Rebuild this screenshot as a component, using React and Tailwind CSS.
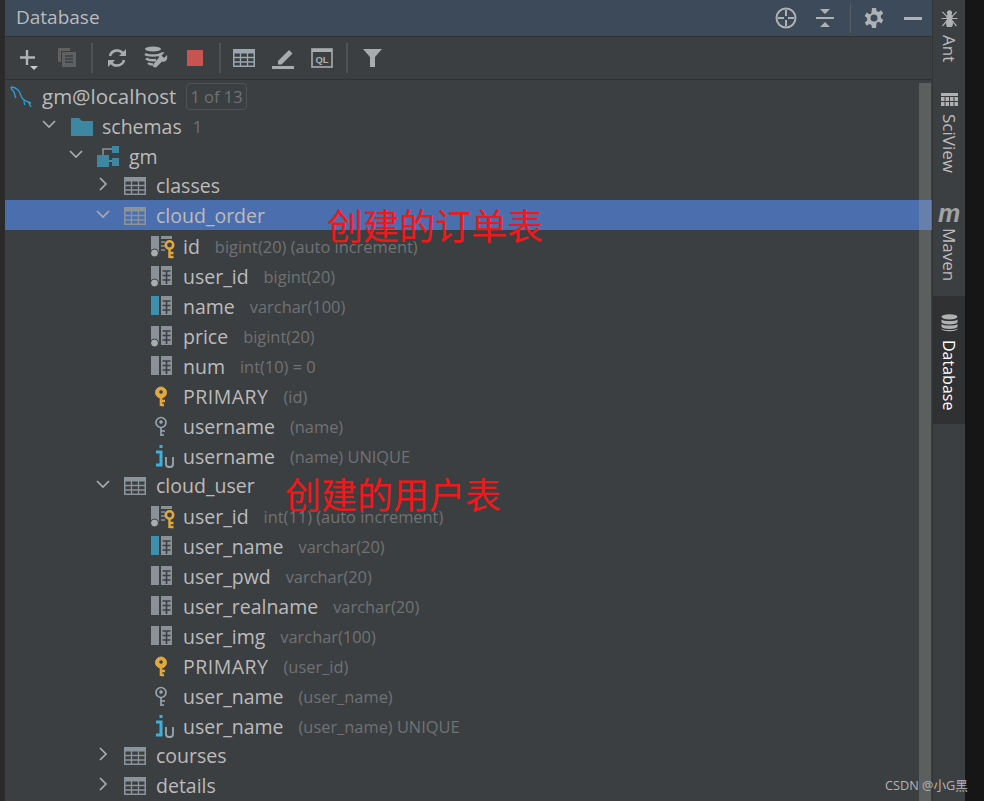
import React from 'react';

function Chevron({ open }) {
  return (
    <svg width="14" height="14" viewBox="0 0 14 14" fill="none" stroke="#a9acae" strokeWidth="1.7">
      {open ? <path d="M1 4l6 6 6-6" /> : <path d="M4 1l6 6-6 6" />}
    </svg>
  );
}

function TableIcon() {
  return (
    <svg width="22" height="18" viewBox="0 0 22 18" fill="none" stroke="#8c949b">
      <rect x="0" y="0" width="22" height="4.500" fill="#8c949b" stroke="none" />
      <path d="M.75 0v18M21.250 0v18M0 17.250h22" strokeWidth="1.500" />
      <path d="M0 8.500h22M0 13h22M7.500 4v14M14.500 4v14" strokeWidth="1.300" />
    </svg>
  );
}

function FolderIcon() {
  return (
    <svg width="22" height="18" viewBox="0 0 22 18">
      <path d="M0 0h8l3 3h11v15H0z" fill="#3d87a3" />
    </svg>
  );
}

function SchemaIcon() {
  return (
    <svg width="22" height="22" viewBox="0 0 22 22">
      <path d="M6 9V3h9M12 15h3" fill="none" stroke="#8c949b" strokeWidth="1.500" />
      <rect x="0" y="9" width="12" height="12" fill="#3d87a3" />
      <rect x="15" y="0" width="7" height="7" fill="#3d87a3" />
      <rect x="15" y="12" width="7" height="8" fill="#3d87a3" />
    </svg>
  );
}

function KeyShape({ color, hollow }) {
  return (
    <svg width="14" height="21" viewBox="0 0 14 21">
      <circle cx="7" cy="6.500" r={hollow ? 5 : 5.500} fill={hollow ? 'none' : color} stroke={color} strokeWidth={hollow ? 1.600 : 1} />
      <circle cx="7" cy="6" r="1.800" fill={hollow ? color : '#3c3f41'} />
      <path d="M7 11v9M7 15h4M7 19h3" fill="none" stroke={color} strokeWidth={hollow ? 1.600 : 2.600} />
    </svg>
  );
}

function ColumnIcon({ kind }) {
  const bar = kind === 'name' ? '#3d8fae' : '#8b9197';
  const dot = kind === 'pk' || kind === 'nn';
  return (
    <svg width="25" height="24" viewBox="0 0 25 24">
      <rect x="0" y="1" width="8" height={dot ? 16 : 19} fill={bar} />
      {dot && <circle cx="3.500" cy="18" r="4" fill="#a9acae" stroke="#3c3f41" strokeWidth="1" />}
      {kind !== 'pk' && (
        <g>
          <rect x="10" y="1" width="11" height="19" fill="#8b9197" />
          <path d="M11.500 6h8M11.500 10.500h8M11.500 15h8M15.500 6v13" stroke="#3c3f41" strokeWidth="1.600" />
        </g>
      )}
      {kind === 'pk' && (
        <g>
          <rect x="10" y="1" width="11" height="3" fill="#8b9197" />
          <path d="M10 7h4M10 11h4M10 15h4" stroke="#8b9197" strokeWidth="1.600" />
          <circle cx="18.500" cy="10" r="3.700" fill="none" stroke="#e0a83f" strokeWidth="2.600" />
          <path d="M18.500 13v10M18.500 18h4M18.500 22h4" stroke="#e0a83f" strokeWidth="2.400" fill="none" />
        </g>
      )}
    </svg>
  );
}

function UniqueIcon() {
  return (
    <svg width="20" height="24" viewBox="0 0 20 24">
      <rect x="3.500" y="0" width="3" height="3" fill="#3fb0dc" />
      <path d="M0 7h5v13H0" fill="none" stroke="#3fb0dc" strokeWidth="3" />
      <path d="M10 12v7a3 3 0 0 0 3 3h1a3 3 0 0 0 3-3v-7" fill="none" stroke="#9aa7b0" strokeWidth="1.800" />
    </svg>
  );
}

function RowIcon({ kind }) {
  if (kind === 'table') return <TableIcon />;
  if (kind === 'folder') return <FolderIcon />;
  if (kind === 'schema') return <SchemaIcon />;
  if (kind === 'pkey') return <span className="pl-[3px]"><KeyShape color="#e0a83f" /></span>;
  if (kind === 'key') return <span className="pl-[3px]"><KeyShape color="#9aa7b0" hollow /></span>;
  if (kind === 'unique') return <span className="pl-[5px]"><UniqueIcon /></span>;
  return <ColumnIcon kind={kind} />;
}

const indent = ['', 'pl-[66px] pt-[3px]', 'pl-[92px] pt-[3px]', 'pl-[119px] pt-[1px]', 'pl-[146px] pt-[3px]'];
const arrowLeft = ['', 'left-[37px]', 'left-[64px]', 'left-[91px]', 'left-[118px]'];
const textLeft = ['', 'w-[31px]', 'w-[32px]', 'w-[32px]', 'w-[32px]'];

const rows = [
  { level: 1, open: true, icon: 'folder', name: 'schemas', extra: '1', gap: 'ml-[11px]' },
  { level: 2, open: true, icon: 'schema', name: 'gm' },
  { level: 3, open: false, icon: 'table', name: 'classes' },
  { level: 3, open: true, icon: 'table', name: 'cloud_order', selected: true },
  { level: 4, icon: 'pk', name: 'id', extra: 'bigint(20) (auto increment)' },
  { level: 4, icon: 'nn', name: 'user_id', extra: 'bigint(20)' },
  { level: 4, icon: 'name', name: 'name', extra: 'varchar(100)' },
  { level: 4, icon: 'nn', name: 'price', extra: 'bigint(20)' },
  { level: 4, icon: 'col', name: 'num', extra: 'int(10) = 0' },
  { level: 4, icon: 'pkey', name: 'PRIMARY', extra: '(id)', wide: true },
  { level: 4, icon: 'key', name: 'username', extra: '(name)' },
  { level: 4, icon: 'unique', name: 'username', extra: '(name) UNIQUE' },
  { level: 3, open: true, icon: 'table', name: 'cloud_user' },
  { level: 4, icon: 'pk', name: 'user_id', extra: 'int(11) (auto increment)' },
  { level: 4, icon: 'name', name: 'user_name', extra: 'varchar(20)' },
  { level: 4, icon: 'col', name: 'user_pwd', extra: 'varchar(20)' },
  { level: 4, icon: 'col', name: 'user_realname', extra: 'varchar(20)' },
  { level: 4, icon: 'col', name: 'user_img', extra: 'varchar(100)' },
  { level: 4, icon: 'pkey', name: 'PRIMARY', extra: '(user_id)', wide: true },
  { level: 4, icon: 'key', name: 'user_name', extra: '(user_name)' },
  { level: 4, icon: 'unique', name: 'user_name', extra: '(user_name) UNIQUE' },
  { level: 3, open: false, icon: 'table', name: 'courses' },
  { level: 3, open: false, icon: 'table', name: 'details' },
];

function TreeRow({ row }) {
  return (
    <div className={`relative flex h-[30px] shrink-0 items-center whitespace-nowrap ${indent[row.level]} ${row.selected ? 'bg-[#4b6eaf]' : ''}`}>
      {row.open !== undefined && (
        <span className={`absolute top-[7px] flex h-[14px] w-[14px] ${arrowLeft[row.level]}`}>
          <Chevron open={row.open} />
        </span>
      )}
      <span className={`flex shrink-0 items-center ${textLeft[row.level]}`}><RowIcon kind={row.icon} /></span>
      <span className={`text-[#bbbbbb] ${row.wide ? 'tracking-[0.5px]' : ''}`}>{row.name}</span>
      {row.extra && <span className={`${row.gap || 'ml-[15px]'} pt-[2px] text-[16.400px] text-[#6f7274]`}>{row.extra}</span>}
    </div>
  );
}

function Sep({ className }) {
  return <span className={`h-[30px] w-[2px] bg-[#505254] ${className}`} />;
}

function Toolbar() {
  return (
    <div className="flex h-[43px] shrink-0 items-center border-b border-[#2f3133] pl-[14px]">
      <svg width="24" height="26" viewBox="0 0 24 26" className="mt-[6px]">
        <path d="M8 2v15M1 9.500h15" stroke="#b0b3b5" strokeWidth="2.400" />
        <path d="M11 18h8l-4 4z" fill="#c8cacc" />
      </svg>
      <svg width="20" height="20" viewBox="0 0 20 20" className="ml-[14px]">
        <path d="M1 0h12v3H4v11H1z" fill="#5e6062" />
        <rect x="5" y="4" width="14" height="15" fill="#5e6062" />
        <path d="M8 8h8M8 11h8M8 14h8" stroke="#3c3f41" strokeWidth="1.300" />
      </svg>
      <Sep className="ml-[14px]" />
      <svg width="20" height="20" viewBox="0 0 20 20" className="ml-[14px]" fill="none">
        <path d="M3 8a7.300 7.300 0 0 1 13-2.500M17 12a7.300 7.300 0 0 1-13 2.500" stroke="#a9acae" strokeWidth="2.600" />
        <path d="M19 1v7h-7zM1 19v-7h7z" fill="#a9acae" />
      </svg>
      <svg width="24" height="24" viewBox="0 0 24 24" className="ml-[17px]" fill="none">
        <ellipse cx="9" cy="3" rx="8" ry="2.500" fill="#a9acae" />
        <path d="M1 8c3 2 13 2 16 0M2 12.500c2 1.500 7 2 10 1.500M4 17c1 1 3 1.500 5 1.500" stroke="#a9acae" strokeWidth="2.400" />
        <path d="M23 9l-3 3-2.500-2.500 3-3c-3-1-6.500 1-5.500 5L9.500 18l-.5 3 3 .5 6-6c4 1 6-2 5-6.500z" fill="#a9acae" />
      </svg>
      <span className="ml-[19px] h-[16px] w-[16px] bg-[#c75450]" />
      <Sep className="ml-[16px]" />
      <svg width="22" height="18" viewBox="0 0 22 18" className="ml-[12px]" fill="none" stroke="#9aa7b0">
        <rect width="22" height="4.500" fill="#9aa7b0" stroke="none" />
        <path d="M.75 0v18M21.250 0v18M0 17.250h22" strokeWidth="1.500" />
        <path d="M0 8.500h22M0 13h22M7.500 4v14M14.500 4v14" strokeWidth="1.300" />
      </svg>
      <svg width="22" height="21" viewBox="0 0 22 21" className="ml-[17px]">
        <path d="M6 13L17 2l3.500 3.500-11 11H6z" fill="#a9acae" />
        <rect y="18" width="22" height="3" fill="#a9acae" />
      </svg>
      <svg width="22" height="20" viewBox="0 0 22 20" className="ml-[17px]">
        <rect x="1" y="1" width="20" height="18" fill="none" stroke="#a9acae" strokeWidth="1.600" />
        <rect x="1" y="1" width="20" height="3" fill="#a9acae" />
        <text x="11" y="15" textAnchor="middle" fontSize="9.500" fontWeight="700" fill="#a9acae" fontFamily="Liberation Sans">QL</text>
      </svg>
      <Sep className="ml-[13px]" />
      <svg width="20" height="20" viewBox="0 0 20 20" className="ml-[15px]">
        <path d="M0 1h19l-7 8v10H7V9z" fill="#a9acae" />
      </svg>
    </div>
  );
}

function Header() {
  return (
    <div className="flex h-[37px] shrink-0 items-center border-b border-[#2f3133] bg-[#3c4a5a] pl-[11px] pr-[10px]">
      <span className="pb-[2px] text-[19px] text-[#bbbbbb]">Database</span>
      <div className="ml-auto flex items-center">
        <svg width="22" height="22" viewBox="0 0 22 22" fill="none" stroke="#afb1b3" strokeWidth="2">
          <circle cx="11" cy="11" r="9.500" />
          <path d="M11 3v6M11 13v6M3 11h6M13 11h6" />
        </svg>
        <svg width="18" height="18" viewBox="0 0 18 18" className="ml-[19px]">
          <path d="M0 8h18v2H0zM4 0h10l-5 5zM4 18h10l-5-5z" fill="#afb1b3" />
        </svg>
        <span className="ml-[16px] h-[30px] w-[1px] bg-[#535b64]" />
        <svg width="20" height="20" viewBox="0 0 20 20" className="ml-[13px]" fill="#afb1b3">
          <path fillRule="evenodd" d="M8 0h4l.6 3 2 .9 2.600-1.700 2 3.400-2.400 2 .1 2.400 2.400 2-2 3.400-2.600-1.700-2 .9L12 20H8l-.6-3-2-.9-2.600 1.700-2-3.400 2.400-2-.1-2.400-2.400-2 2-3.400 2.600 1.700 2-.9zM10 6.500a3.500 3.500 0 1 0 0 7 3.500 3.500 0 0 0 0-7z" />
        </svg>
        <span className="ml-[20px] h-[3px] w-[18px] bg-[#afb1b3]" />
      </div>
    </div>
  );
}

function SideTab({ label, active, icon, className }) {
  return (
    <div className={`flex flex-col items-center ${active ? 'bg-[#2f3133] text-white' : 'text-[#bbbbbb]'} ${className}`}>
      {icon}
      <span className={`mt-[8px] leading-[20px] [writing-mode:vertical-rl] ${active ? 'text-[16px]' : 'text-[17px]'}`}>{label}</span>
    </div>
  );
}

function SideBar() {
  return (
    <div className="flex w-[33px] shrink-0 flex-col border-l border-[#323436] bg-[#3c3f41]">
      <SideTab
        label="Ant"
        className="pt-[10px]"
        icon={
          <svg width="17" height="17" viewBox="0 0 17 18" stroke="#afb1b3" fill="#afb1b3" strokeWidth="1.300">
            <ellipse cx="8.500" cy="3" rx="2" ry="2.200" />
            <ellipse cx="8.500" cy="8" rx="2.600" ry="2.800" />
            <ellipse cx="8.500" cy="14" rx="3" ry="4" />
            <path d="M1 2l5 5M16 2l-5 5M0 9h6M17 9h-6M1 17l5-6M16 17l-5-6" fill="none" />
          </svg>
        }
      />
      <SideTab
        label="SciView"
        className="pt-[31px]"
        icon={
          <svg width="17" height="13" viewBox="0 0 17 13" fill="#afb1b3">
            <path d="M0 0h17v3H0zM0 4h3.500v4H0zM4.500 4h3.500v4H4.500zM9 4h3.500v4H9zM13.500 4H17v4h-3.500zM0 9h3.500v4H0zM4.500 9h3.500v4H4.500zM9 9h3.500v4H9zM13.500 9H17v4h-3.500z" />
          </svg>
        }
      />
      <SideTab
        label="Maven"
        className="pt-[34px]"
        icon={
          <span className="h-[13px] font-['Liberation_Sans',sans-serif] text-[25px] font-bold italic leading-[13px] text-[#a0a2a4]">m</span>
        }
      />
      <SideTab
        label="Database"
        active
        className="mt-[15px] h-[128px] pt-[18px]"
        icon={
          <svg width="17" height="18" viewBox="0 0 17 18" fill="#afb1b3">
            <ellipse cx="8.500" cy="2.800" rx="8" ry="2.600" />
            <path d="M.5 5.500c2 2 14 2 16 0v3c-2 2.500-14 2.500-16 0zM.5 10c2 2 14 2 16 0v3c-2 2.500-14 2.500-16 0zM.5 14.500c2 2 14 2 16 0V15c-1 3-15 3-16 0z" />
          </svg>
        }
      />
    </div>
  );
}

export default function App() {
  return (
    <div className="flex h-[801px] w-[984px] overflow-hidden bg-[#161616] font-['Open_Sans','Noto_Sans_CJK_SC',sans-serif] text-[19.500px]">
      <div className="w-[5px] shrink-0 bg-[#2b2b2b]" />
      <div className="relative flex w-[927px] shrink-0 flex-col bg-[#3c3f41]">
        <Header />
        <Toolbar />
        <div className="flex flex-col overflow-hidden">
          <div className="relative flex h-[30px] shrink-0 items-center whitespace-nowrap pl-[5px] pt-[3px]">
            <svg width="23" height="22" viewBox="0 0 23 22" fill="none" stroke="#2b9fd8" strokeWidth="1.300">
              <path d="M1 1c3 0 5 1 7 3 3 3 2 6 5 9 2 2 5 3 8 4l-2 0 2 4M1 1c0 3 2 3 3 5 1 3 1 5 2 6M14 14c0 2 0 3 1 5" />
            </svg>
            <span className="ml-[9px] text-[20.500px] text-[#bbbbbb]">gm@localhost</span>
            <span className="ml-[10px] rounded-[4px] border border-[#505254] px-[3px] text-[16.500px] leading-[25px] text-[#6f7274]">1 of 13</span>
          </div>
          {rows.map((row, i) => <TreeRow key={i} row={row} />)}
        </div>
        {/* scrollbar on top of the tree */}
        <div className="absolute bottom-0 right-[1px] top-[83px] w-[12px] bg-[#a8a8a8]/30" />
        <span className="absolute left-[322px] top-[202px] whitespace-nowrap text-[36px] leading-[50px] text-[#f01818]">创建的订单表</span>
        <span className="absolute left-[280px] top-[471px] whitespace-nowrap text-[36px] leading-[50px] text-[#f01818]">创建的用户表</span>
      </div>
      <SideBar />
      <div className="flex-1" />
      <span className="absolute left-[885px] top-[776px] whitespace-nowrap text-[12.700px] text-[#b4b4b4]">CSDN @小G黑</span>
    </div>
  );
}
